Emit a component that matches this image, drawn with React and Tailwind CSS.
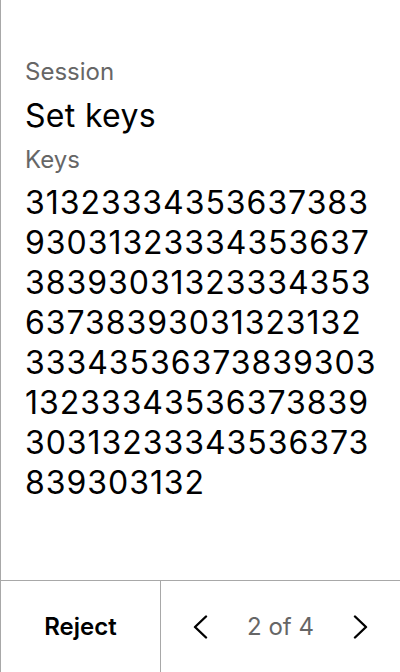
import React from 'react';

const KEY_LINES = [
  '31323334353637383',
  '93031323334353637',
  '38393031323334353',
  '63738393031323132',
  '33343536373839303',
  '13233343536373839',
  '30313233343536373',
  '839303132',
];

const Chevron = ({ dir }) => (
  <svg width="16" height="24" viewBox="0 0 16 24" fill="none" stroke="#000" strokeWidth="2.4" strokeLinecap="round" strokeLinejoin="round">
    {dir === 'left' ? <path d="M14 1.5 L3 12 L14 22.5" /> : <path d="M2 1.5 L13 12 L2 22.5" />}
  </svg>
);

export default function App() {
  return (
    <div className="w-[400px] h-[672px] bg-white border-l border-[#a8a8a8] flex flex-col" style={{ fontFamily: 'Inter, "Noto Sans", sans-serif' }}>
      <div className="flex-1 pt-[58px] px-6">
        <p className="text-[24px] leading-7 text-[#666]">Session</p>
        <h1 className="text-[32px] leading-[36px] mt-[12px] text-black tracking-[0.01em]">Set keys</h1>
        <p className="text-[24px] leading-7 mt-[12px] text-[#666]">Keys</p>
        <p className="text-[32px] leading-10 mt-[9px] text-black tracking-[0.03em]">
          {KEY_LINES.map((l, i) => (
            <span key={i} className="block">{l}</span>
          ))}
        </p>
      </div>
      <div className="h-[92px] border-t border-[#a8a8a8] flex">
        <button className="w-[160px] border-r border-[#a8a8a8] text-[24px] font-semibold text-black">Reject</button>
        <div className="flex-1 flex items-center justify-between px-[31px]">
          <Chevron dir="left" />
          <span className="text-[24px] text-[#666]">2 of 4</span>
          <Chevron dir="right" />
        </div>
      </div>
    </div>
  );
}
